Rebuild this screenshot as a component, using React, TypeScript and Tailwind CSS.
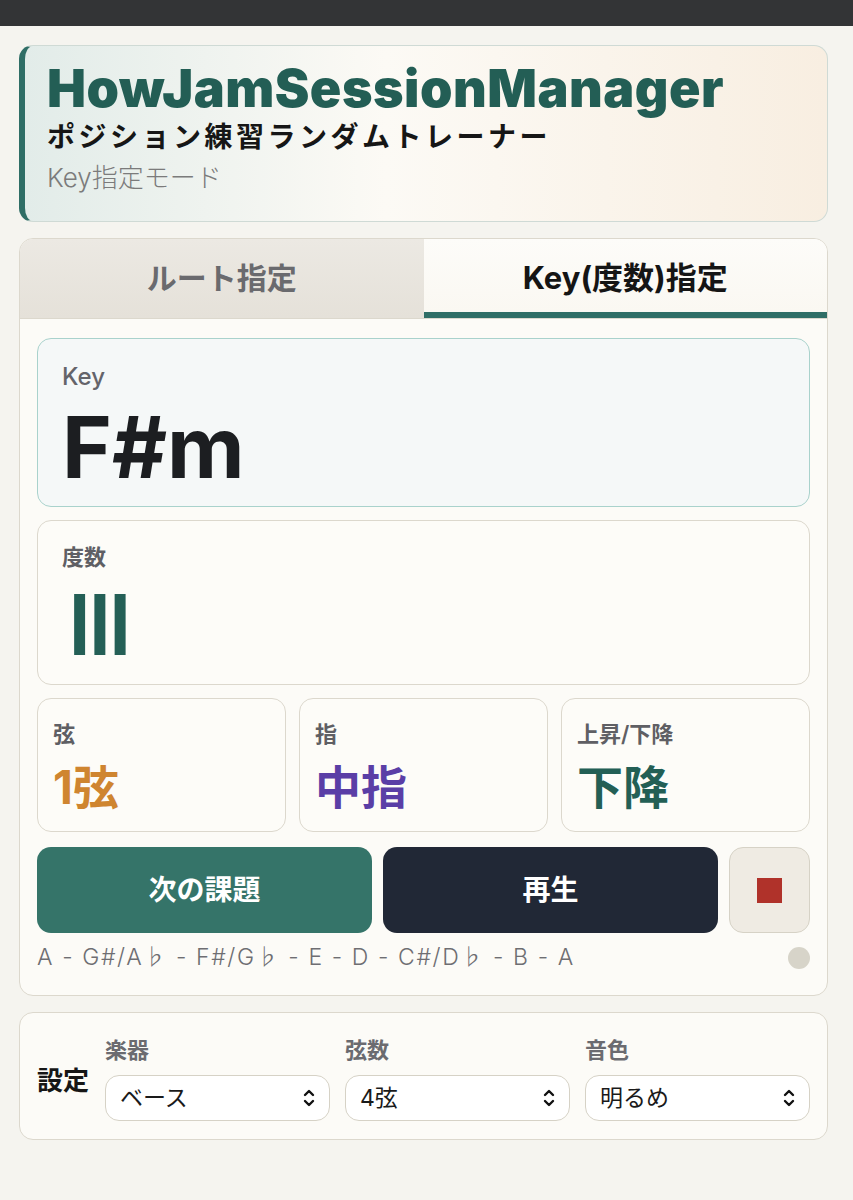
import { useState } from 'react';

const FONT = "font-['Inter','Noto_Sans_CJK_JP',sans-serif]";

// 上下の小さい矢印（セレクトの右端）
const Chevrons = () => (
  <svg width="14" height="22" viewBox="0 0 14 22" fill="none" stroke="#111" strokeWidth="2.4" strokeLinecap="round" strokeLinejoin="round">
    <path d="M3 8 L7 4 L11 8" />
    <path d="M3 14 L7 18 L11 14" />
  </svg>
);

interface SelectProps {
  label: string;
  value: string;
  options: string[];
  onChange: (v: string) => void;
}

const SettingSelect: React.FC<SelectProps> = ({ label, value, options, onChange }) => (
  <div className="flex flex-col gap-[14px]">
    <span className="text-[22px] leading-none font-semibold text-[#6b6b70]">{label}</span>
    <div className="relative">
      <select
        value={value}
        onChange={(e) => onChange(e.target.value)}
        className={`${FONT} w-full h-[46px] appearance-none rounded-[14px] border border-[#d6d2c6] bg-white pl-[14px] pr-10 text-[23px] text-[#1a1a1a] outline-none`}
      >
        {options.map((o) => (
          <option key={o} value={o}>{o}</option>
        ))}
      </select>
      <div className="pointer-events-none absolute right-[14px] top-1/2 -translate-y-1/2">
        <Chevrons />
      </div>
    </div>
  </div>
);

const InfoBox: React.FC<{ label: string; value: string; color: string }> = ({ label, value, color }) => (
  <div className="h-[134px] rounded-[14px] border border-[#dcd8cd] bg-[#fdfcf8] pl-[15px] pt-[24px]">
    <p className="text-[22px] leading-none font-semibold text-[#5f5f64]">{label}</p>
    <p className={`mt-[19px] text-[46px] leading-none font-bold ${color}`}>{value}</p>
  </div>
);

export default function App() {
  const [tab, setTab] = useState<'root' | 'key'>('key');
  const [instrument, setInstrument] = useState('ベース');
  const [strings, setStrings] = useState('4弦');
  const [tone, setTone] = useState('明るめ');

  return (
    <div className={`${FONT} min-h-screen bg-[#f5f4ef]`}>
      <div className="h-[26px] bg-[#333436]" />

      <div className="flex flex-col gap-4 pl-[19px] pr-[25px] pt-[19px] pb-10">
        {/* ヘッダー */}
        <header className="h-[177px] rounded-[14px] border border-[#cfdad5] border-l-[6px] border-l-[#2f6e66] bg-linear-to-r from-[#e2ece9] via-[#fcfaf5] via-45% to-[#f8eee1] pl-[22px] pt-[17px]">
          <h1 className="text-[52px] leading-none font-black tracking-[0.5px] text-[#235e55]">HowJamSessionManager</h1>
          <p className="mt-[8px] text-[28px] leading-none font-bold tracking-[3.5px] text-[#161616]">ポジション練習ランダムトレーナー</p>
          <p className="mt-[14px] text-[26px] leading-none font-light text-[#7b7b7b]">Key指定モード</p>
        </header>

        {/* メイン */}
        <section className="overflow-hidden rounded-[14px] border border-[#dcd8cd] bg-[#fcfbf7]">
          <div className="grid h-[80px] grid-cols-2 border-b border-[#dcd8cd]">
            <button
              onClick={() => setTab('root')}
              className={`flex items-center justify-center text-[30px] font-bold ${tab === 'root' ? 'border-b-[6px] border-[#2f6e66] bg-[#fcfbf8] pt-[6px] text-[#151515]' : 'bg-linear-to-b from-[#ece9e3] to-[#e5e1d9] text-[#6a6a6e]'}`}
            >
              ルート指定
            </button>
            <button
              onClick={() => setTab('key')}
              className={`flex items-center justify-center text-[31px] font-bold ${tab === 'key' ? 'border-b-[6px] border-[#2f6e66] bg-linear-to-b from-[#fdfcf9] to-[#faf8f2] pt-[6px] text-[#151515]' : 'bg-linear-to-b from-[#ece9e3] to-[#e5e1d9] text-[#6a6a6e]'}`}
            >
              Key(度数)指定
            </button>
          </div>

          <div className="flex flex-col gap-[13px] px-[17px] pt-[19px] pb-[26px]">
            <div className="h-[169px] rounded-[14px] border border-[#a9d2cc] bg-[#f5f8f8] pl-[24px] pt-[26px]">
              <p className="text-[24px] leading-none font-medium text-[#64646a]">Key</p>
              <p className="mt-[16px] text-[85px] leading-none font-bold text-[#1c1e21]">F#m</p>
            </div>

            <div className="h-[165px] rounded-[14px] border border-[#dcd8cd] bg-[#fdfcf8] pl-[24px] pt-[25px]">
              <p className="text-[22px] leading-none font-semibold text-[#5f5f64]">度数</p>
              <p className="ml-[6px] mt-[15px] text-[84px] leading-none font-semibold tracking-[-3px] text-[#245f56]">III</p>
            </div>

            <div className="grid grid-cols-3 gap-[13px]">
              <InfoBox label="弦" value="1弦" color="text-[#cf8530]" />
              <InfoBox label="指" value="中指" color="text-[#5a3ea6]" />
              <InfoBox label="上昇/下降" value="下降" color="text-[#235f55]" />
            </div>

            <div className="mt-[2px] grid grid-cols-[1fr_1fr_81px] gap-[11px]">
              <button className="h-[86px] rounded-[14px] bg-[#357469] text-[28px] font-bold text-white">次の課題</button>
              <button className="h-[86px] rounded-[14px] bg-[#212836] text-[28px] font-bold text-white">再生</button>
              <button className="flex h-[86px] items-center justify-center rounded-[14px] border border-[#d6d2c6] bg-[#efebe3]">
                <span className="h-[25px] w-[25px] bg-[#b0322a]" />
              </button>
            </div>

            <div className="flex items-center justify-between">
              <p className="text-[23px] leading-none font-light tracking-[1.6px] text-[#6e6e72]">A - G#/A♭ - F#/G♭ - E - D - C#/D♭ - B - A</p>
              <span className="h-[22px] w-[22px] rounded-full bg-[#d7d4c9]" />
            </div>
          </div>
        </section>

        {/* 設定 */}
        <section className="flex items-center gap-4 rounded-[14px] border border-[#dcd8cd] bg-[#fcfbf7] px-[17px] pt-[26px] pb-[18px]">
          <span className="text-[26px] font-bold text-[#161616]">設定</span>
          <div className="grid flex-1 grid-cols-3 gap-[15px]">
            <SettingSelect label="楽器" value={instrument} options={['ベース', 'ギター']} onChange={setInstrument} />
            <SettingSelect label="弦数" value={strings} options={['4弦', '5弦', '6弦']} onChange={setStrings} />
            <SettingSelect label="音色" value={tone} options={['明るめ', '暗め']} onChange={setTone} />
          </div>
        </section>
      </div>
    </div>
  );
}
